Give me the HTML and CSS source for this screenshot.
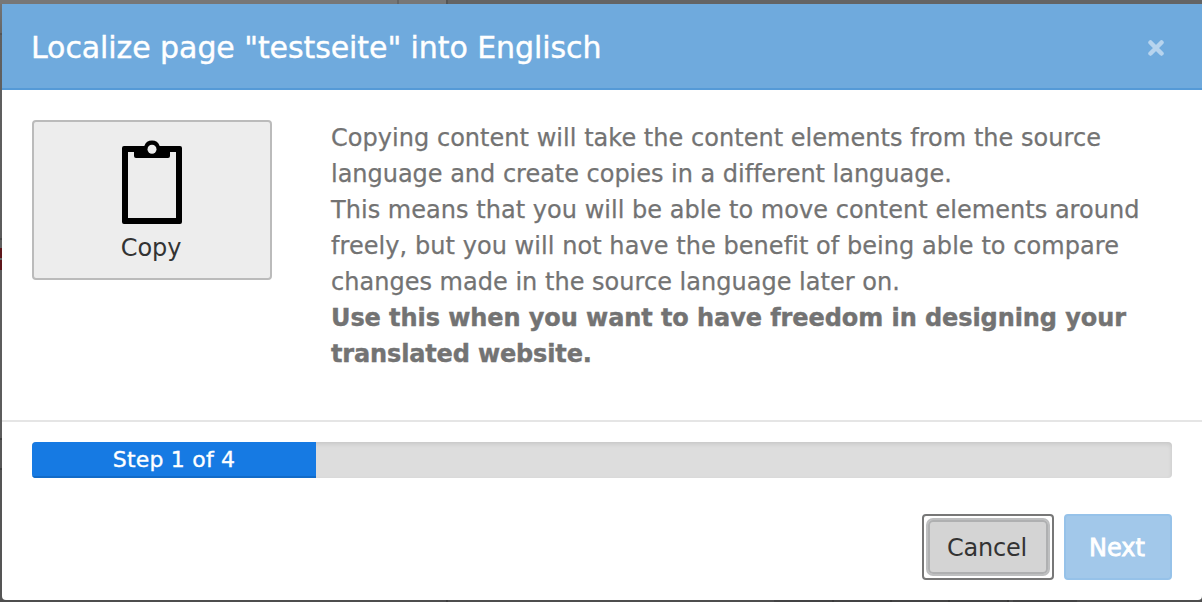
FILE: index.html
```html
<!DOCTYPE html>
<html lang="en">
<head>
<meta charset="utf-8">
<title>Localize page</title>
<link rel="stylesheet" href="styles.css">
</head>
<body>
<div class="modal">
  <header class="modal-header">
    <h1 class="title">Localize page "testseite" into Englisch</h1>
    <button class="close" aria-label="Close"><svg width="16" height="16" viewBox="0 0 16 16"><path d="M2.500 2.500 13.500 13.500M13.500 2.500 2.500 13.500"/></svg></button>
  </header>
  <main class="modal-body">
    <button class="choice">
      <svg class="clipboard" width="60" height="84" viewBox="0 0 60 84"><path fill-rule="evenodd" d="M2 6H22.300A8.200 8.200 0 0 1 37.700 6H58Q60 6 60 8V82Q60 84 58 84H2Q0 84 0 82V8Q0 6 2 6ZM6 12V78H54V12H48V16Q48 18 46 18H14Q12 18 12 16V12Z"/><circle cx="30" cy="9.300" r="4.500"/></svg>
      <span class="choice-label">Copy</span>
    </button>
    <p class="description">
      <span class="line spaced">Copying content will take the content elements from the source</span>
      <span class="line snug">language and create copies in a different language.</span>
      <span class="line spaced">This means that you will be able to move content elements around</span>
      <span class="line wide">freely, but you will not have the benefit of being able to compare</span>
      <span class="line loose">changes made in the source language later on.</span>
      <strong class="line tight">Use this when you want to have freedom in designing your</strong>
      <strong class="line tighter">translated website.</strong>
    </p>
  </main>
  <footer class="modal-footer">
    <div class="progress"><div class="progress-bar">Step 1 of 4</div></div>
    <div class="actions">
      <button class="btn btn-cancel"><span class="btn-face">Cancel</span></button>
      <button class="btn btn-next">Next</button>
    </div>
  </footer>
</div>
</body>
</html>
```
FILE: styles.css
```css
* { box-sizing: border-box; }
body {
  margin: 0; width: 1202px; height: 602px; overflow: hidden; padding: 4px 0 2px 2px;
  font-family: Verdana, "DejaVu Sans", sans-serif;
  background:
    linear-gradient(90deg, #777 397px, #666 397px 399px, #777 399px 446px, #555 446px 448px, #646464 448px) 0 0 / 100% 4px no-repeat,
    linear-gradient(90deg, #4d4d4e 446px, #3e3e3f 446px 448px, #4d4d4e 448px 774px, #434344 774px 832px, #39393a 832px 834px, #434344 834px 890px, #39393a 890px 892px, #434344 892px 948px, #39393a 948px 950px, #434344 950px 1007px, #39393a 1007px 1009px, #4d4d4e 1009px 1013px, #434344 1013px 1077px, #4d4d4e 1077px) 0 100% / 100% 2px no-repeat,
    linear-gradient(#757575, #676767 33px, #555 33px 35px, #606060 35px, #5c5c5c 238px, #484848 238px 240px, #606060 240px 248px, #5e171b 248px 258px, #666 258px 260px, #5e171b 260px 270px, #5c5c5c 270px 438px, #404040 438px 440px, #585858 440px 468px, #404040 468px 470px, #555 470px);
}
button { font: inherit; padding: 0; margin: 0; }
.modal { width: 1200px; height: 596px; background: #fff; display: flex; flex-direction: column; border-radius: 0 0 4px 4px; overflow: hidden; }
.modal-header { height: 86px; background: #6faadd; border-bottom: 2px solid #559ad7; display: flex; align-items: center; justify-content: space-between; padding: 2px 38px 0 29px; color: #fff; }
.title { margin: 0; font-size: 30px; font-weight: 400; white-space: nowrap; letter-spacing: -.08px; -webkit-text-stroke: .4px #fff; }
.close { background: none; border: 0; width: 16px; height: 16px; display: flex; margin-top: 2px; }
.close path { stroke: #b7d4ee; stroke-width: 4.5; stroke-linecap: round; }
.modal-body { height: 330px; padding: 30px; display: flex; gap: 59px; align-items: flex-start; }
.choice { width: 240px; height: 160px; background: #ededed; border: 2px solid #bbb; border-radius: 4px; display: flex; flex-direction: column; align-items: center; padding-top: 18px; color: #333; font-size: 24px; }
.choice-label { line-height: 36px; margin: 6px 2px 0 0; letter-spacing: -.1px; }
.clipboard circle { fill: #ededed; }
.description { margin: 0; color: #737373; font-size: 24px; line-height: 36px; -webkit-text-stroke: .25px #737373; }
.description strong { -webkit-text-stroke: .4px #737373; }
.line { display: block; white-space: nowrap; }
.spaced { letter-spacing: .035px; }
.snug { letter-spacing: -.02px; }
.wide { letter-spacing: .06px; }
.loose { letter-spacing: .02px; }
.tight { letter-spacing: -.075px; }
.tighter { letter-spacing: -.15px; }
.modal-footer { border-top: 2px solid #e5e5e5; height: 180px; padding: 20px 30px; }
.progress { height: 36px; background: #ddd; border-radius: 4px; box-shadow: inset 0 2px 4px rgba(0,0,0,.1); overflow: hidden; }
.progress-bar { width: 284px; height: 36px; background: #167ae3; box-shadow: inset 0 -2px #126bc8; color: #fff; font-size: 22px; line-height: 36px; text-align: center; letter-spacing: .2px; -webkit-text-stroke: .35px #fff; }
.actions { display: flex; justify-content: flex-end; gap: 10px; margin-top: 36px; }
.btn { font-size: 24px; height: 66px; border-radius: 4px; }
.btn-cancel { width: 132px; padding: 2px; background: #fff; border: 2px solid #777; color: #333; }
.btn-face { display: flex; align-items: center; justify-content: center; width: 124px; height: 58px; padding: 2px 2px 0 0; background: #d4d4d4; border: 2px solid #bebfc0; border-radius: 7px; box-shadow: inset 0 0 0 2px #afb0b1; letter-spacing: -.25px; }
.btn-next { width: 108px; padding: 2px 2px 0 0; background: #a2c8ea; border: 2px solid #96c2e9; color: #fff; -webkit-text-stroke: .8px #fff; }
```
